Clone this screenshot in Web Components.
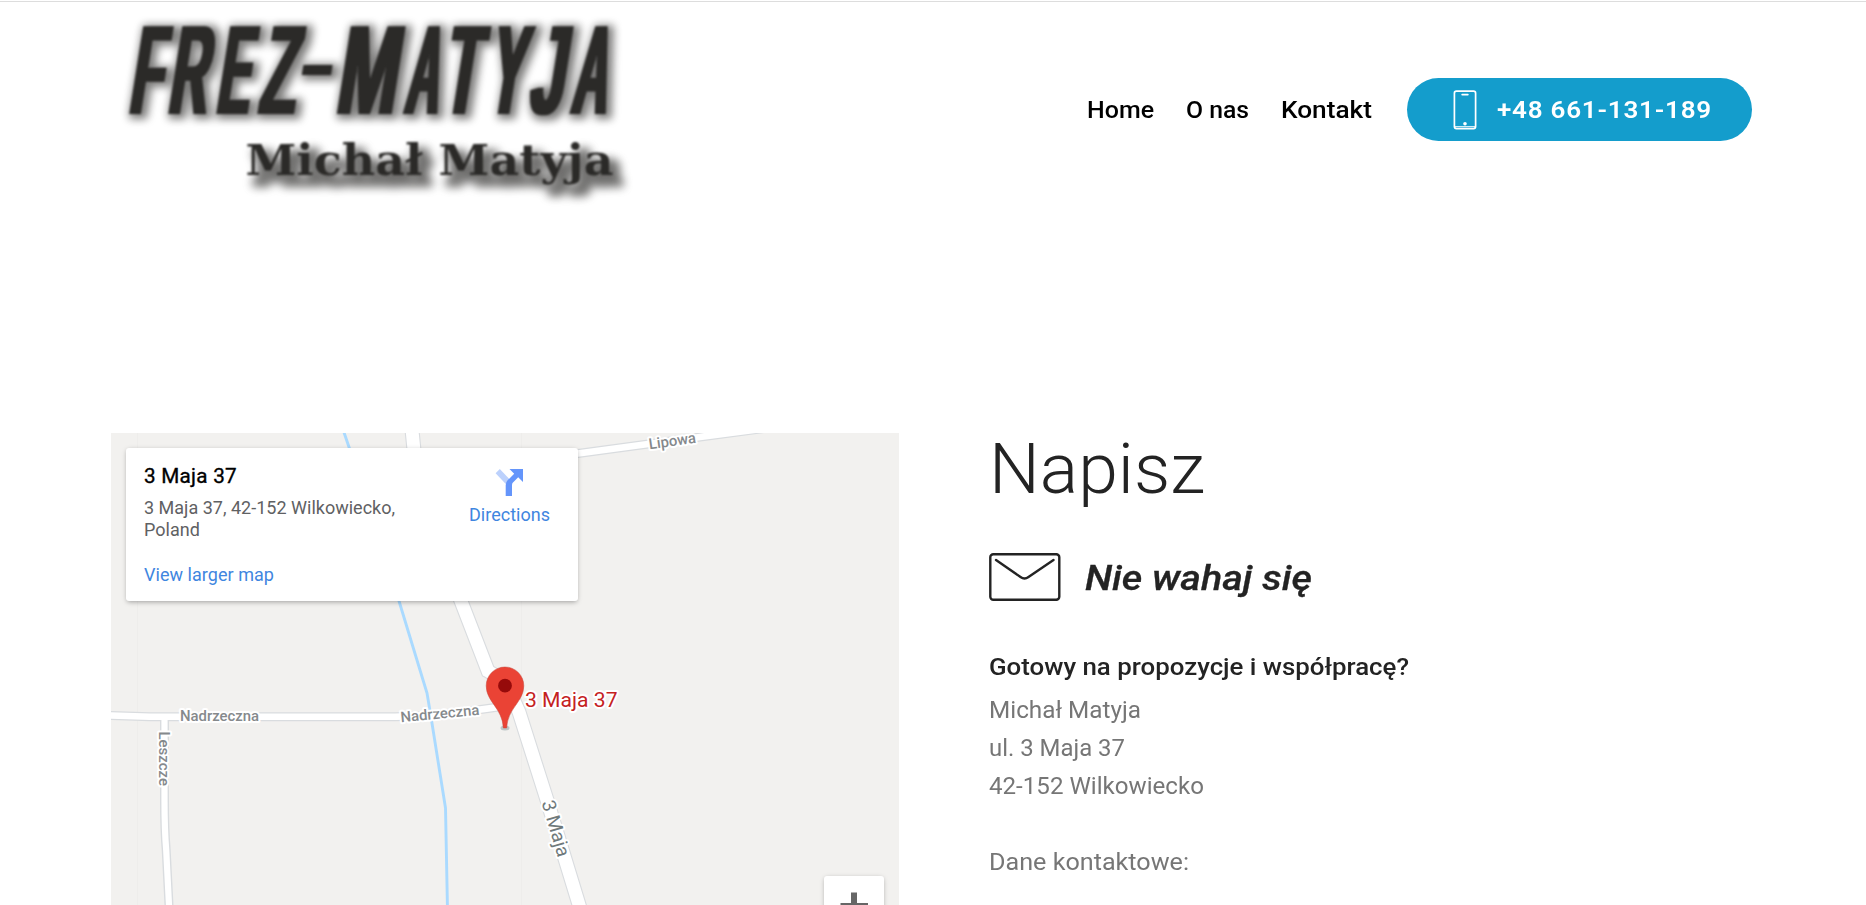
<!DOCTYPE html>
<html lang="pl"><head><meta charset="utf-8"><title>FREZ-MATYJA – Kontakt</title>
<style>
html,body{margin:0;height:905px;overflow:hidden;background:#fff}
body{font-family:Roboto,"Liberation Sans",sans-serif}
</style></head><body>
<contact-page></contact-page>
<script>
const define=(name,html)=>customElements.define(name,class extends HTMLElement{
  constructor(){super();this.attachShadow({mode:'open'}).innerHTML=html;}
});

/* One line of text that fills the width given in "w": by tracking, or with "wide" mostly by wider letters. */
customElements.define('fit-line',class extends HTMLElement{
  constructor(){super();this.attachShadow({mode:'open'}).innerHTML='<style>:host{display:block;width:max-content;white-space:nowrap}span{display:inline-block;transform-origin:0 50%}</style><span><slot></slot></span>';}
  connectedCallback(){
    const w=+this.getAttribute('w');
    const span=this.shadowRoot.querySelector('span');
    const natural=span.getBoundingClientRect().width;
    if(!w||!natural)return;
    if(this.hasAttribute('wide')){
      span.style.transform='scaleX('+(w/natural).toFixed(4)+')';
      this.style.width=w+'px';
    }else this.style.letterSpacing=((w-natural)/this.textContent.length).toFixed(3)+'px';
  }
});

define('site-logo',`<style>:host{display:block;width:560px;height:215px}svg{display:block;overflow:visible}</style>
<svg width="560" height="215" viewBox="100 2 560 215">
<defs>
<filter id="bold" x="100" y="14" width="560" height="200" filterUnits="userSpaceOnUse" color-interpolation-filters="sRGB">
<feMorphology in="SourceGraphic" operator="dilate" radius="2 0" result="d"/><feGaussianBlur in="d" stdDeviation=".8" result="t"/>
<feMorphology in="d" operator="dilate" radius="3" result="e"/><feGaussianBlur in="e" stdDeviation="4.5" result="b"/><feOffset in="b" dx="3" dy="2" result="s"/>
<feComponentTransfer in="s" result="s2"><feFuncA type="linear" slope=".62"/></feComponentTransfer>
<feMerge><feMergeNode in="s2"/><feMergeNode in="t"/></feMerge></filter>
<filter id="soft" x="200" y="120" width="460" height="97" filterUnits="userSpaceOnUse" color-interpolation-filters="sRGB">
<feGaussianBlur in="SourceGraphic" stdDeviation=".8" result="t"/><feMorphology in="SourceGraphic" operator="dilate" radius="3" result="e"/><feGaussianBlur in="e" stdDeviation="5" result="b"/><feOffset in="b" dx="8" dy="9" result="s"/>
<feComponentTransfer in="s" result="s2"><feFuncA type="linear" slope=".68"/></feComponentTransfer>
<feMerge><feMergeNode in="s2"/><feMergeNode in="t"/></feMerge></filter>
</defs>
<g filter="url(#bold)"><g transform="translate(0 114.3) skewX(-9.1)"><text y="0" font-family="Liberation Sans" font-weight="700" font-size="127.500" fill="#2b2a28"><tspan x="127.8" textLength="32" lengthAdjust="spacingAndGlyphs">F</tspan><tspan x="166.7" textLength="38.500" lengthAdjust="spacingAndGlyphs">R</tspan><tspan x="215" textLength="32.500" lengthAdjust="spacingAndGlyphs">E</tspan><tspan x="257.4" textLength="36.200" lengthAdjust="spacingAndGlyphs">Z</tspan><tspan x="293.6" y="-22.500" font-size="85" textLength="33" lengthAdjust="spacingAndGlyphs">-</tspan><tspan x="333.9" y="0" textLength="60.5" lengthAdjust="spacingAndGlyphs">M</tspan><tspan x="403.5" textLength="33" lengthAdjust="spacingAndGlyphs">A</tspan><tspan x="441.3" textLength="35" lengthAdjust="spacingAndGlyphs">T</tspan><tspan x="485.8" textLength="35.500" lengthAdjust="spacingAndGlyphs">Y</tspan><tspan x="527.5" textLength="34.5" lengthAdjust="spacingAndGlyphs">J</tspan><tspan x="570" textLength="35" lengthAdjust="spacingAndGlyphs">A</tspan></text></g></g>
<g filter="url(#soft)"><text x="245.500" y="174.500" font-family="DejaVu Serif" font-weight="700" font-size="43.800" textLength="368" lengthAdjust="spacingAndGlyphs" fill="#2b2a28">Michał Matyja</text></g>
</svg>`);

define('phone-button',`<style>
:host{display:flex;align-items:center;box-sizing:border-box;width:345px;height:63px;border-radius:31.5px;background:#149dcc;color:#fff;padding-left:46px;gap:20px}
svg{display:block}</style>
<svg width="24" height="40" viewBox="0 0 24 40" fill="none" stroke="#fff"><rect x="1.4" y="1.2" width="21.2" height="37.4" rx="2" stroke-width="1.7"/><path d="M1.5 36.7h21" stroke-width="1"/><path d="M9.2 4.6h5.6" stroke-width="1.8" stroke-linecap="round"/><ellipse cx="12" cy="33.7" rx="1.8" ry="1.7" fill="#fff" stroke="none"/></svg>
<slot></slot>`);

define('site-header',`<style>
:host{display:flex;box-sizing:border-box;height:216px;border-top:1px solid #ddd;align-items:center;padding:0 114px 0 100px;justify-content:space-between}
nav{display:flex;align-items:center;font-weight:500;font-size:24px;line-height:38px;color:#000}
.l{display:flex;gap:32px;margin-right:35px}
</style><site-logo></site-logo>
<nav><div class="l"><fit-line wide w="67">Home</fit-line><fit-line wide w="63">O nas</fit-line><fit-line wide w="91">Kontakt</fit-line></div>
<phone-button><fit-line wide w="215" style="font-weight:600;letter-spacing:.7px">+48 661-131-189</fit-line></phone-button></nav>`);

define('place-card',`<style>
:host{position:absolute;left:15px;top:15px;width:452px;height:153px;box-sizing:border-box;background:#fff;border-radius:3px;box-shadow:0 1.5px 5px -1px rgba(0,0,0,.35);padding:16px 28px 0 18px;display:flex;justify-content:space-between;font-size:18px;line-height:22px;color:#5f6163}
.t{font-size:20.7px;-webkit-text-stroke:.35px #000;color:#000;line-height:24px;margin-bottom:9px}
.a{color:#3f86e0}.v{margin-top:23px}
.d{display:flex;flex-direction:column;align-items:center;padding-top:5px}
svg{display:block;margin:0 2px 8px 0}
</style><div><fit-line class="t" w="93">3 Maja 37</fit-line><fit-line w="251">3 Maja 37, 42-152 Wilkowiecko,</fit-line><fit-line w="56">Poland</fit-line><fit-line class="a v" w="130">View larger map</fit-line></div>
<div class="d"><svg width="28" height="27" viewBox="0 0 28 27"><path d="M4.8 0 .6 4.2 10.8 15l4-4.5z" fill="#bcd1fc"/><path d="M14.5 0H28v13l-4.8-4.7-5.7 5.8Q17 15 17 16.600V27h-6.300V16Q10.700 13.200 12.600 11.300L19.200 4.700z" fill="#6495fb"/></svg><fit-line class="a" w="81">Directions</fit-line></div>`);

define('map-zoom',`<style>:host{position:absolute;right:15px;top:443px;width:60px;height:60px;background:#fff;border-radius:3px;box-shadow:0 1px 5px -1px rgba(0,0,0,.35)}svg{display:block}</style>
<svg width="60" height="60" viewBox="0 0 60 60"><path d="M27 16.500h6V27h11v6H33v11h-6V33H16.500v-6H27z" fill="#666"/></svg>`);

define('map-view',`<style>
:host{display:block;position:relative;width:788px;height:472px;overflow:hidden;background:#f2f1ef}
svg{display:block}
text{font-family:Roboto,sans-serif;font-weight:500;paint-order:stroke;stroke:#fff;stroke-width:4px;stroke-linejoin:round;fill:#85898c}
</style>
<svg width="788" height="472" viewBox="111 433 788 472">
<defs>
<path id="maja" d="M411 420 414 450C420 490 440 548 461 601L488 671Q506 681 519 712L547 800 584 921"/>
<path id="nad" d="M105 715.400 150 716.700H395Q440 716 505 706"/>
<path id="les" d="M164.500 717V800Q164.500 830 166.200 850L169.500 915"/>
<path id="lip" d="M500 464 578 453.500 700 437 775 427"/>
</defs>
<path d="M137.500 433V905M521.500 433V905" stroke="#eeedeb"/>
<g fill="none" stroke="#d9dcdf"><use href="#maja" stroke-width="15"/><use href="#nad" stroke-width="9"/><use href="#les" stroke-width="9"/><use href="#lip" stroke-width="9"/></g>
<g fill="none" stroke="#fff"><use href="#maja" stroke-width="12.800"/><use href="#nad" stroke-width="6.600"/><use href="#les" stroke-width="6.200"/><use href="#lip" stroke-width="6.800"/></g>
<path d="M343.500 431 350 450 399 601 427 693 431 717 445.500 808 447.500 910" fill="none" stroke="#aadaff" stroke-width="2.900"/>
<text x="180" y="721" font-size="14.600" textLength="79" lengthAdjust="spacingAndGlyphs">Nadrzeczna</text>
<text transform="translate(401 722.300) rotate(-5.500)" font-size="14.600" textLength="79" lengthAdjust="spacingAndGlyphs">Nadrzeczna</text>
<text transform="translate(158.800 731.500) rotate(90)" font-size="14.600" textLength="54.500" lengthAdjust="spacingAndGlyphs">Leszcze</text>
<text transform="translate(649.500 449.300) rotate(-8)" font-size="15" textLength="47.500" lengthAdjust="spacingAndGlyphs">Lipowa</text>
<text transform="translate(541.500 802.500) rotate(73.500)" font-size="19" textLength="58" lengthAdjust="spacingAndGlyphs" style="font-weight:400;fill:#6f797b">3 Maja</text>
<ellipse cx="505" cy="728" rx="4.500" ry="2.500" fill="#9aa" opacity=".6"/>
<path d="M505 667a18.800 18.800 0 0 1 18.800 18.800C523.800 702 507.500 708 506.700 728h-3.400C502.500 708 486.200 702 486.200 685.800A18.800 18.800 0 0 1 505 667z" fill="#ea4335" stroke="#c5463a" stroke-width=".5"/>
<circle cx="505" cy="685.700" r="6.900" fill="#960a0a"/>
<text x="525" y="707" font-size="21" textLength="92.500" lengthAdjust="spacingAndGlyphs" style="font-weight:400;fill:#c5221f">3 Maja 37</text>
</svg><place-card></place-card><map-zoom></map-zoom>`);

define('contact-info',`<style>
:host{display:block;color:#232323}
.h{font-size:70px;line-height:80px;font-weight:300;margin:-4px 0 44px 0}
.r{display:flex;gap:24px;align-items:center;height:47px;margin-bottom:48px}
svg{display:block}
.i{font-size:34.500px;line-height:40px;font-weight:500;font-style:italic;-webkit-text-stroke:.3px #232323;padding-top:3px}
.g{font-size:24px;line-height:38px;font-weight:500;margin-bottom:5px}
.p{font-size:23.900px;line-height:38px;color:#767676}.s{margin-top:38px}
</style>
<fit-line wide class="h" w="216">Napisz</fit-line>
<div class="r"><svg width="72" height="48" viewBox="0 0 72 48" fill="none" stroke="#232323" stroke-width="2.400" stroke-linecap="round"><rect x="1.300" y="1.200" width="69" height="45.600" rx="3"/><path d="M7 7 31.500 24Q35.500 27 39.500 24L64.500 7"/></svg><fit-line wide class="i" w="227">Nie wahaj się</fit-line></div>
<fit-line wide class="g" w="420">Gotowy na propozycje i współpracę?</fit-line>
<fit-line wide class="p" w="152">Michał Matyja</fit-line><fit-line wide class="p" w="136">ul. 3 Maja 37</fit-line><fit-line wide class="p" w="215">42-152 Wilkowiecko</fit-line><fit-line wide class="p s" w="200">Dane kontaktowe:</fit-line>`);

define('contact-page',`<style>:host{display:block;height:905px;box-sizing:border-box;padding-top:1px;overflow:hidden}
main{display:grid;grid-template-columns:788px 1fr;column-gap:89.600px;margin:216px 0 0 111px}</style>
<site-header></site-header><main><map-view></map-view><contact-info></contact-info></main>`);
</script></body></html>
